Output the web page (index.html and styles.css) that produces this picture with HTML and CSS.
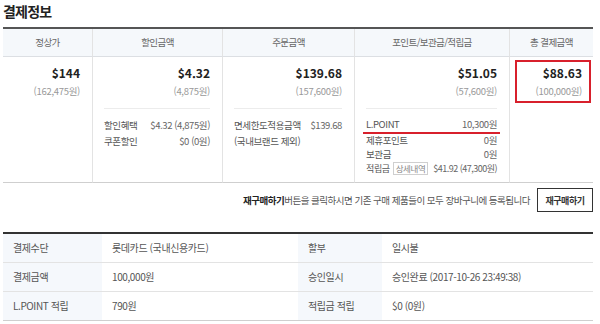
FILE: index.html
```html
<!DOCTYPE html>
<html lang="ko">
<head>
<meta charset="utf-8">
<link rel="stylesheet" href="styles.css">
</head>
<body>
<div class="page">
  <h2 class="title">결제정보</h2>
  <div class="t1">
    <div class="th">정상가</div>
    <div class="th">할인금액</div>
    <div class="th">주문금액</div>
    <div class="th">포인트/보관금/적립금</div>
    <div class="th">총 결제금액</div>

    <div class="td">
      <div class="amt"><div class="usd">$144</div><div class="krw">(162,475원)</div></div>
    </div>
    <div class="td">
      <div class="amt"><div class="usd">$4.32</div><div class="krw">(4,875원)</div></div>
      <div class="sep"></div>
      <div class="details">
        <div class="row"><span class="lb">할인혜택</span><span class="val">$4.32 (4,875원)</span></div>
        <div class="row"><span class="lb">쿠폰할인</span><span class="val">$0 (0원)</span></div>
      </div>
    </div>
    <div class="td">
      <div class="amt"><div class="usd">$139.68</div><div class="krw">(157,600원)</div></div>
      <div class="sep"></div>
      <div class="details">
        <div class="row"><span class="lb">면세한도적용금액</span><span class="val">$139.68</span></div>
        <div class="row"><span class="lb">(국내브랜드 제외)</span></div>
      </div>
    </div>
    <div class="td">
      <div class="amt"><div class="usd">$51.05</div><div class="krw">(57,600원)</div></div>
      <div class="sep"></div>
      <div class="details pts">
        <div class="row lpoint"><span class="lb">L.POINT</span><span class="val">10,300원</span></div>
        <div class="row tight"><span class="lb">제휴포인트</span><span class="val">0원</span></div>
        <div class="row tight"><span class="lb">보관금</span><span class="val">0원</span></div>
        <div class="row save"><span class="lb">적립금</span><span class="more">상세내역</span><span class="val grow">$41.92 (47,300원)</span></div>
      </div>
    </div>
    <div class="td total">
      <div class="amt hl"><div class="usd">$88.63</div><div class="krw">(100,000원)</div></div>
    </div>
  </div>

  <div class="rebuy">
    <p class="note"><strong>재구매하기</strong>버튼을 클릭하시면 기존 구매 제품들이 모두 장바구니에 등록됩니다</p>
    <button class="btn" type="button">재구매하기</button>
  </div>

  <div class="t2">
    <div class="k">결제수단</div><div class="v">롯데카드 (국내신용카드)</div>
    <div class="k">할부</div><div class="v">일시불</div>
    <div class="k">결제금액</div><div class="v">100,000원</div>
    <div class="k">승인일시</div><div class="v">승인완료 (2017-10-26 23:49:38)</div>
    <div class="k last">L.POINT 적립</div><div class="v last">790원</div>
    <div class="k last">적립금 적립</div><div class="v last">$0 (0원)</div>
  </div>
</div>
</body>
</html>
```
FILE: styles.css
```css
* { box-sizing: border-box; }
body {
  margin: 0;
  background: #fff;
  font-family: "Noto Sans CJK KR", "Noto Sans", sans-serif;
  color: #444;
}
.page {
  width: 600px;
  padding: 0 7px 0 3px;
}
.title {
  margin: 0;
  height: 27px;
  font-size: 14px;
  line-height: 22px;
  font-weight: bold;
  color: #222;
  letter-spacing: -0.8px;
}
.t1 {
  display: grid;
  grid-template-columns: 89px 130px 132px 155px 84px;
  border-top: 2px solid #555;
}
.th {
  height: 28px;
  background: #f5f8fb;
  border-bottom: 1px solid #dcdfe3;
  font-size: 9.5px;
  line-height: 27px;
  text-align: center;
  color: #666;
  letter-spacing: -0.6px;
}
.th + .th, .td + .td { border-left: 1px solid #e3e3e3; }
.td {
  height: 126px;
  border-bottom: 1px solid #cfcfcf;
  padding: 3px 12px 0 11px;
}
.amt {
  text-align: right;
  padding: 4px 0 3px;
}
.usd {
  font-size: 12px;
  line-height: 18px;
  font-weight: bold;
  color: #222;
}
.krw {
  font-size: 9.5px;
  line-height: 18px;
  color: #999;
  letter-spacing: -0.3px;
}
.sep {
  margin-top: 5px;
  border-top: 1px solid #ececec;
}
.details {
  margin-top: 8px;
  font-size: 9.5px;
  line-height: 16px;
  color: #555;
  letter-spacing: -0.4px;
}
.row {
  display: flex;
  justify-content: space-between;
  align-items: center;
  white-space: nowrap;
}
.val { color: #666; }
.lpoint {
  margin: 0 -3px;
  padding: 0 3px;
  line-height: 15px;
  border-bottom: 2px solid #d8202c;
}
.tight { line-height: 13.5px; }
.save { height: 15px; line-height: 13px; font-size: 9px; }
.more {
  margin-left: 3px;
  border: 1px solid #cfcfcf;
  padding: 0 2px;
  font-size: 8.5px;
  line-height: 11px;
  color: #888;
}
.grow { flex: 1; text-align: right; letter-spacing: -0.5px; }
.total { padding: 3px 2px 0 5px; }
.hl {
  border: 2px solid #d8202c;
  padding: 2px 7px 1px;
}
.rebuy {
  display: flex;
  justify-content: flex-end;
  align-items: center;
  gap: 7px;
  margin-top: 5px;
  height: 24px;
}
.note {
  margin: 0;
  font-size: 9.5px;
  color: #555;
  letter-spacing: -0.5px;
}
.note strong { color: #222; }
.btn {
  width: 56px;
  height: 24px;
  padding: 0;
  border: 1px solid #333;
  background: #fff;
  font-family: inherit;
  font-size: 9px;
  font-weight: bold;
  color: #333;
  letter-spacing: -0.5px;
}
.t2 {
  display: grid;
  grid-template-columns: 99px 196px 84px 211px;
  margin-top: 20px;
  border-top: 2px solid #333;
}
.k, .v {
  height: 29px;
  padding-left: 10px;
  font-size: 10px;
  line-height: 28px;
  border-bottom: 1px solid #e3e3e3;
  letter-spacing: -0.4px;
}
.k { background: #f5f8fc; color: #555; }
.v { color: #555; }
.k.last, .v.last { border-bottom-color: #cfcfcf; }
```
